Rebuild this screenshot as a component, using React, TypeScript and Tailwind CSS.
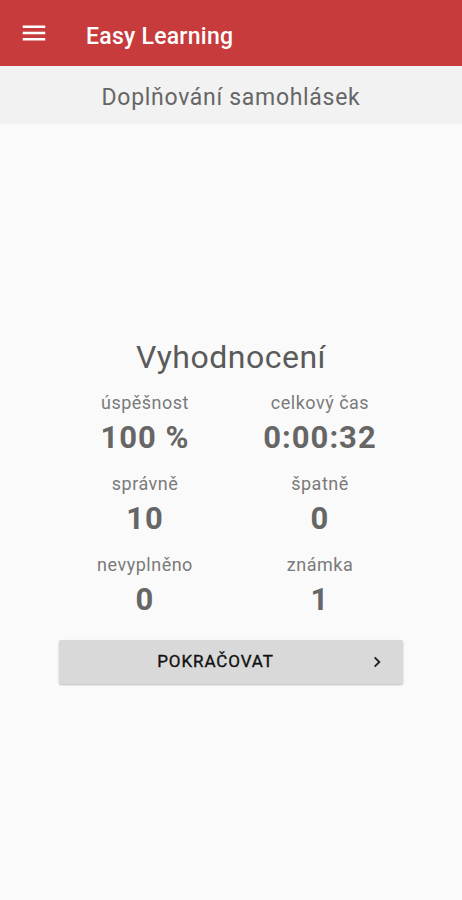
import React from 'react';

const stats = [
  { label: 'úspěšnost', value: '100 %' },
  { label: 'celkový čas', value: '0:00:32' },
  { label: 'správně', value: '10' },
  { label: 'špatně', value: '0' },
  { label: 'nevyplněno', value: '0' },
  { label: 'známka', value: '1' },
];

const App: React.FC = () => {
  return (
    <div className="h-[900px] w-full flex flex-col bg-[#fafafa] font-['Roboto',sans-serif] overflow-hidden">
      {/* Toolbar */}
      <header className="h-[66px] shrink-0 bg-[#c73b3c] flex items-center shadow-sm">
        <button className="w-[68px] h-full flex items-center justify-center">
          <svg width="30" height="30" viewBox="0 0 24 24" fill="#fff">
            <path d="M3 18h18v-2H3v2zm0-5h18v-2H3v2zm0-7v2h18V6H3z" />
          </svg>
        </button>
        <h1 className="ml-[18px] pt-[8px] text-white text-[23px] font-medium tracking-[0.25px]">Easy Learning</h1>
      </header>

      {/* Subtitle */}
      <div className="h-[58px] shrink-0 bg-[#f2f2f2] flex items-center justify-center pt-[6px]">
        <span className="text-[23px] text-[#666666] tracking-[0.7px]">Doplňování samohlásek</span>
      </div>

      {/* Result */}
      <main className="flex-1 flex items-center justify-center">
        <div className="w-[344px] flex flex-col items-center -mt-[2px]">
          <h2 className="text-[32px] text-[#5a5a5a] leading-[40px] tracking-[0.5px] -mt-[2px] mb-[2px]">Vyhodnocení</h2>
          <div className="w-full grid grid-cols-2 mt-[12px]">
            {stats.map((s, i) => (
              <div key={s.label} className={`flex flex-col items-center h-[81px] ${i % 2 === 1 ? 'pl-[6px]' : ''}`}>
                <span className="text-[18px] text-[#7a7a7a] leading-[24px] tracking-[0.5px]">{s.label}</span>
                <span className="text-[31px] font-bold text-[#666666] leading-[38px] mt-[4px] tracking-[1px]">{s.value}</span>
              </div>
            ))}
          </div>
          <button className="w-full h-[44px] mt-[6px] bg-[#d9d9d9] rounded-[2px] shadow-[0_1px_2px_rgba(0,0,0,0.25)] flex items-center pr-[19px]">
            <span className="flex-1 text-center text-[17px] font-normal text-[#111111] tracking-[0.9px] pl-[2px] [-webkit-text-stroke:0.35px_#111111]">POKRAČOVAT</span>
            <svg width="14" height="14" viewBox="0 0 24 24" fill="none" stroke="#222" strokeWidth="3.2">
              <path d="M8 4l8 8-8 8" />
            </svg>
          </button>
        </div>
      </main>
    </div>
  );
};

export default App;
